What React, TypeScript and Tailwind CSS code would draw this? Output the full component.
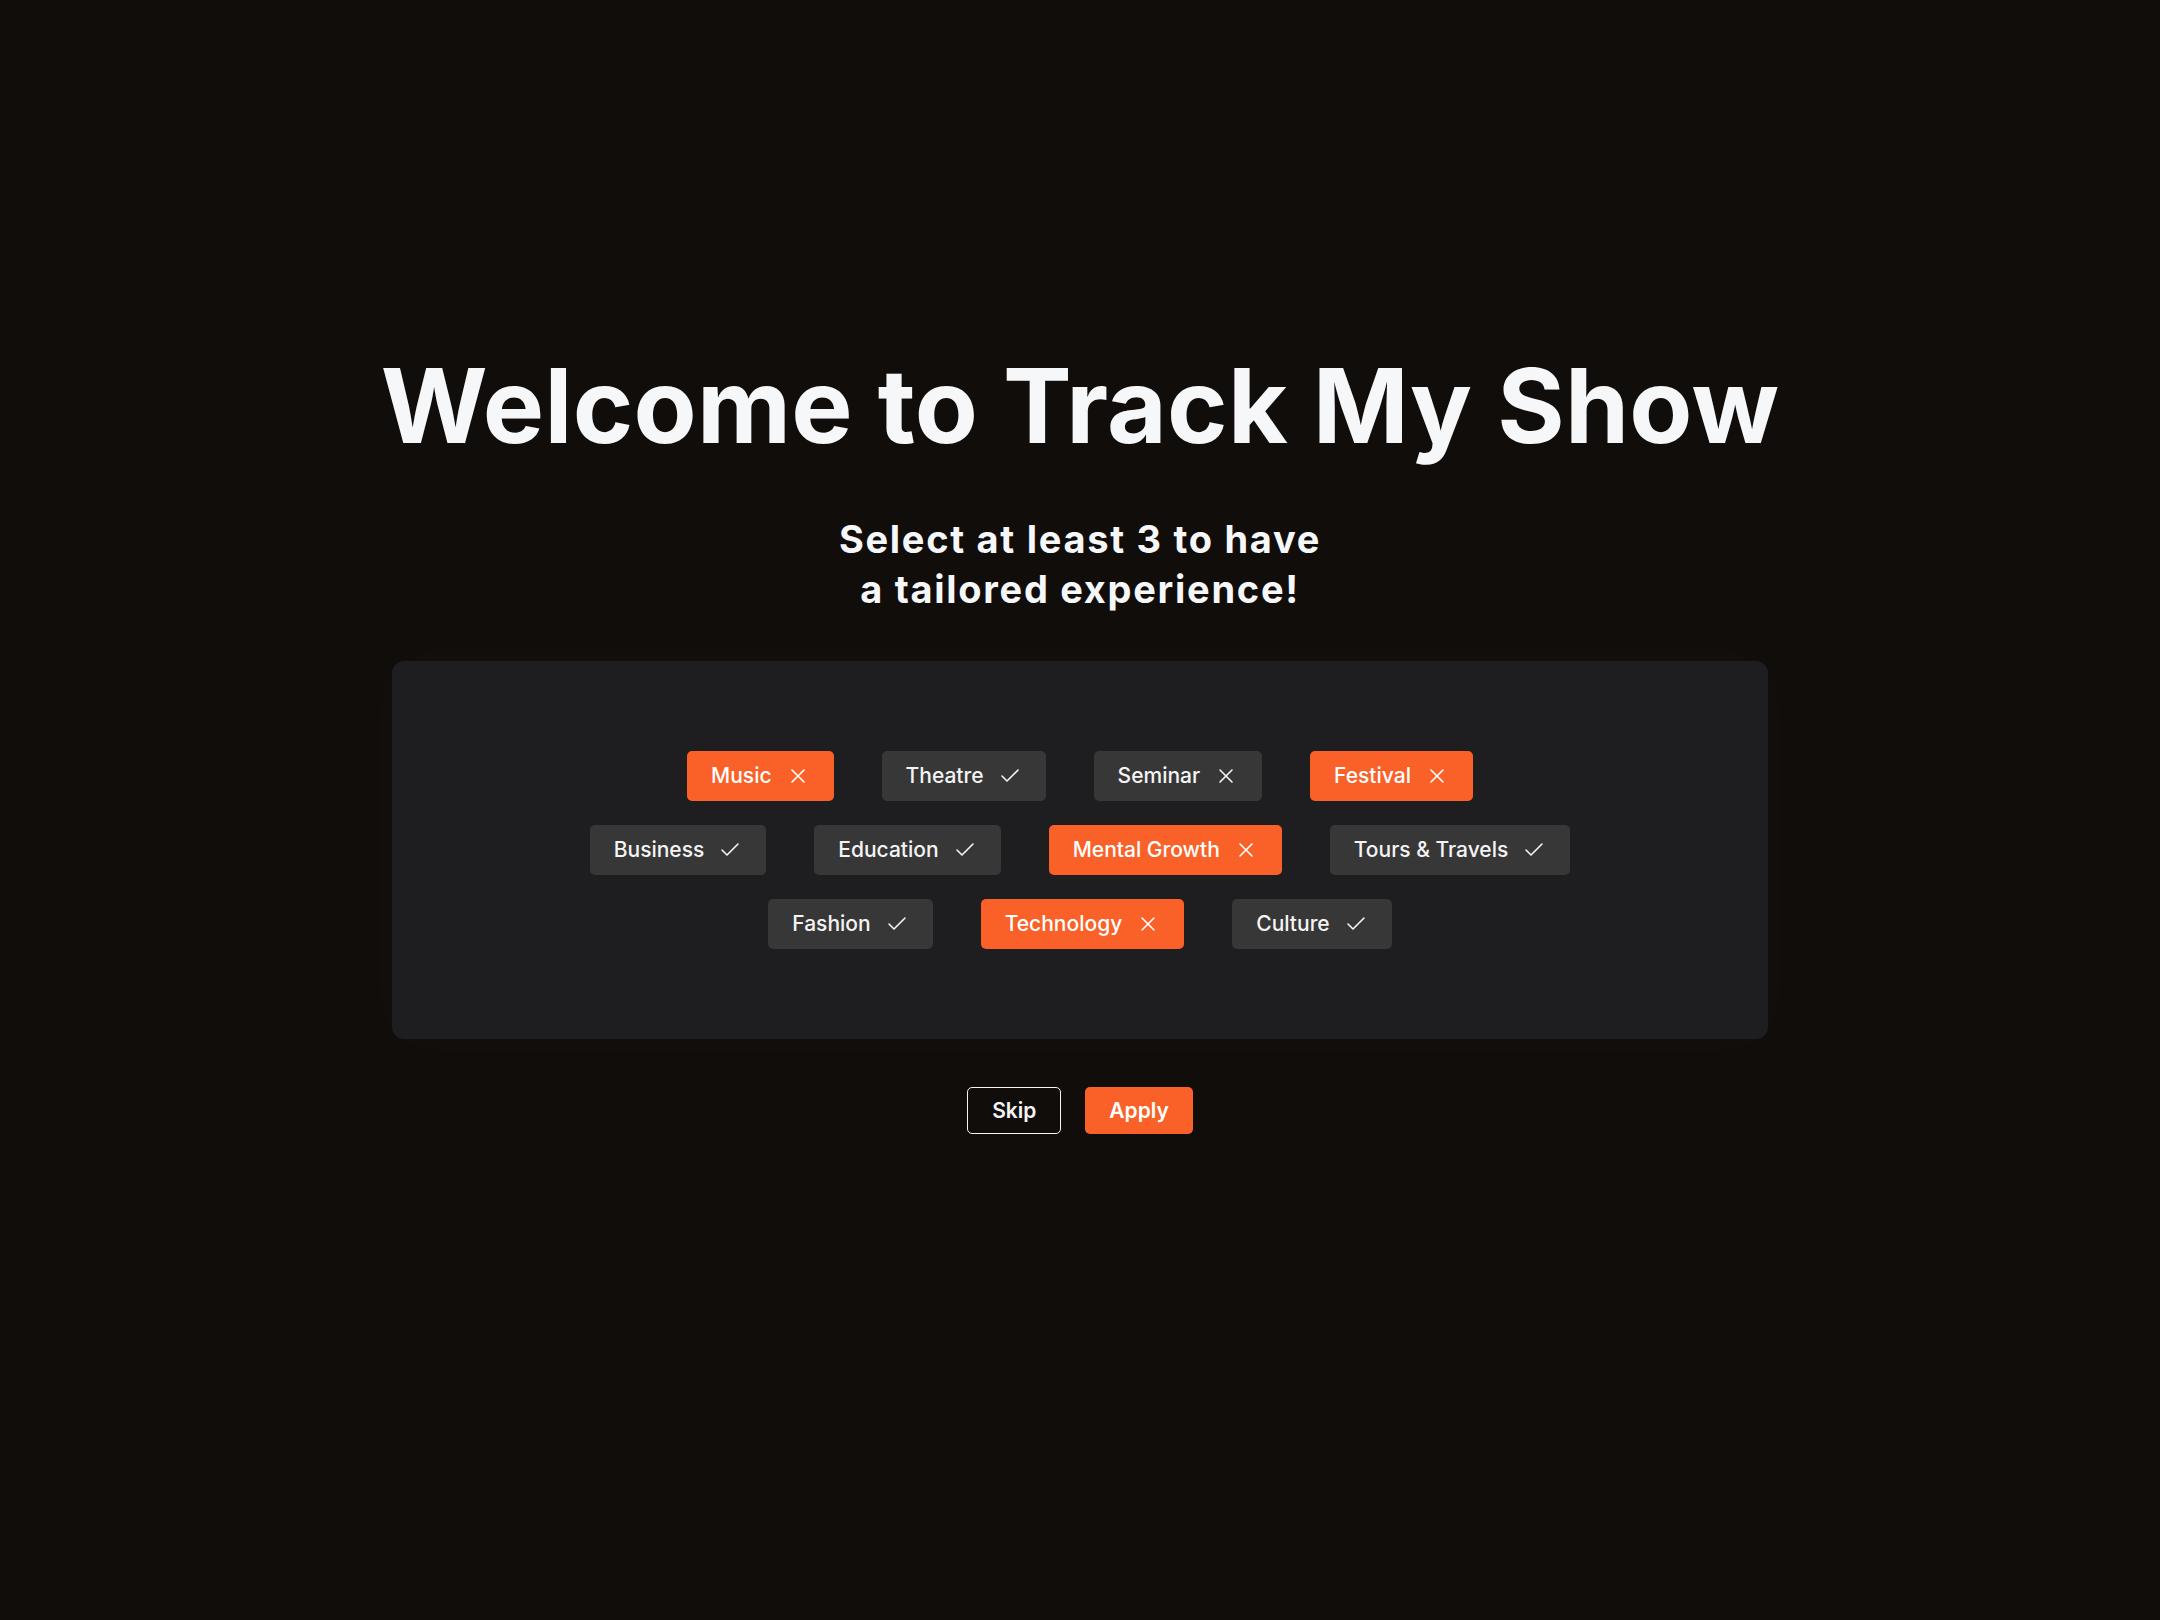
import React from "react";

const XIcon = () => (
  <svg width="24" height="24" viewBox="0 0 24 24" fill="none" stroke="currentColor" strokeWidth="1.6" strokeLinecap="round" strokeLinejoin="round">
    <path d="M18 6 6 18" />
    <path d="m6 6 12 12" />
  </svg>
);

const CheckIcon = () => (
  <svg width="24" height="24" viewBox="0 0 24 24" fill="none" stroke="currentColor" strokeWidth="1.6" strokeLinecap="round" strokeLinejoin="round">
    <path d="M20 6 9 17l-5-5" />
  </svg>
);

type Chip = { label: string; selected: boolean };

const rows: Chip[][] = [
  [
    { label: "Music", selected: true },
    { label: "Theatre", selected: false },
    { label: "Seminar", selected: false },
    { label: "Festival", selected: true },
  ],
  [
    { label: "Business", selected: false },
    { label: "Education", selected: false },
    { label: "Mental Growth", selected: true },
    { label: "Tours & Travels", selected: false },
  ],
  [
    { label: "Fashion", selected: false },
    { label: "Technology", selected: true },
    { label: "Culture", selected: false },
  ],
];

function ChipButton({ chip, xIcon }: { chip: Chip; xIcon: boolean }) {
  return (
    <button
      className={
        chip.selected
          ? "flex h-[50px] items-center gap-[14px] rounded-[5px] bg-[#f96129] pl-6 pr-6 text-[21px] font-medium text-white"
          : "flex h-[50px] items-center gap-[14px] rounded-[5px] bg-[#383738] pl-6 pr-6 text-[21px] font-medium text-[#f4f4f5]"
      }
    >
      <span>{chip.label}</span>
      {xIcon ? <XIcon /> : <CheckIcon />}
    </button>
  );
}

export default function App() {
  return (
    <div
      className="min-h-[1620px] w-full bg-[#110d0b] text-[#f6f7f9]"
      style={{ fontFamily: "Inter, 'Noto Sans', sans-serif" }}
    >
      <div className="flex flex-col items-center pt-[354px]">
        <h1 className="text-[103px] font-bold leading-none tracking-[0.003em] text-[#f6f7f9]">
          Welcome to Track My Show
        </h1>
        <p className="mt-[57px] text-center text-[38px] font-bold leading-[50px] tracking-[0.045em] text-[#f6f7f9]">
          Select at least 3 to have
          <br />
          a tailored experience!
        </p>
        <div className="mt-[47px] flex w-[1376px] flex-col items-center gap-6 rounded-xl bg-[#1e1d1f] py-[90px] shadow-[0_0_60px_rgba(255,255,255,0.025)]">
          {rows.map((row, i) => (
            <div key={i} className="flex items-center justify-center gap-12">
              {row.map((chip) => (
                <ChipButton
                  key={chip.label}
                  chip={chip}
                  xIcon={chip.selected || chip.label === "Seminar"}
                />
              ))}
            </div>
          ))}
        </div>
        <div className="mt-12 flex items-center gap-6">
          <button className="h-[47px] rounded-[5px] border-[1.5px] border-[#f4f4f5] px-6 text-[21px] font-semibold text-[#f4f4f5]">
            Skip
          </button>
          <button className="h-[47px] rounded-[5px] bg-[#f96129] px-6 text-[21px] font-semibold text-white">
            Apply
          </button>
        </div>
      </div>
    </div>
  );
}
